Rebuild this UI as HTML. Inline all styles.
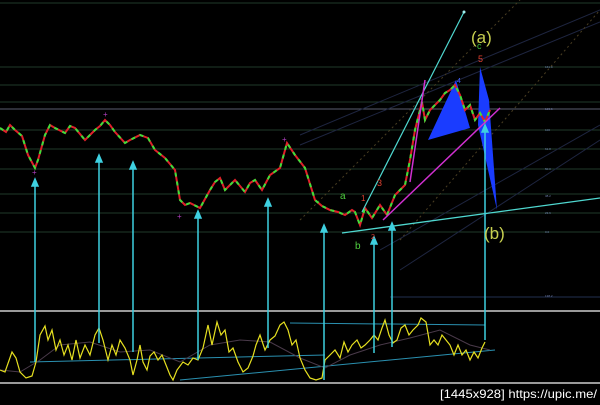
<!DOCTYPE html>
<html><head><style>
html,body{margin:0;padding:0;background:#000;}
svg{display:block;}
</style></head><body>
<svg width="600" height="405" viewBox="0 0 600 405" xmlns="http://www.w3.org/2000/svg" font-family="Liberation Sans, sans-serif">
<rect width="600" height="405" fill="#000"/>
<g stroke="#1f3a2a" stroke-width="1">
<line x1="0" y1="3" x2="600" y2="3"/>
<line x1="0" y1="67" x2="600" y2="67"/>
<line x1="0" y1="85" x2="600" y2="85"/>
<line x1="0" y1="102" x2="600" y2="102"/>
<line x1="0" y1="130" x2="600" y2="130"/>
<line x1="0" y1="149" x2="600" y2="149"/>
<line x1="0" y1="169" x2="600" y2="169"/>
<line x1="0" y1="194" x2="600" y2="194"/>
<line x1="0" y1="213" x2="600" y2="213"/>
<line x1="0" y1="232" x2="600" y2="232"/>
</g>
<line x1="0" y1="109" x2="600" y2="109" stroke="#5a5e70" stroke-width="1"/>
<line x1="390" y1="297" x2="600" y2="297" stroke="#223050"/>
<g font-size="3" fill="#7080b0">
<text x="545" y="68">161.8</text><text x="545" y="110">123.6</text><text x="545" y="131">100</text>
<text x="545" y="150">61.8</text><text x="545" y="170">50.0</text><text x="545" y="197">38.2</text>
<text x="545" y="214">23.6</text><text x="545" y="233">0.0</text><text x="545" y="297">138.2</text>
</g>
<g stroke="#1e2540" stroke-width="1" fill="none">
<line x1="300" y1="135" x2="600" y2="10"/>
<line x1="300" y1="145" x2="600" y2="22"/>
<line x1="380" y1="250" x2="600" y2="125"/>
<line x1="400" y1="270" x2="600" y2="140"/>
</g>
<g stroke="#4a3e22" stroke-width="1" stroke-dasharray="2 3" fill="none">
<line x1="300" y1="220" x2="520" y2="0"/>
<line x1="400" y1="240" x2="600" y2="10"/>
</g>
<polygon points="428,140 456,80 470,128" fill="#1a3cff"/>
<polygon points="480,67 489,100 497,210 478,125" fill="#1a3cff"/>
<polyline fill="none" stroke="#e0202a" stroke-width="2" points="0,128 6,132 10,125 15,130 22,136 28,155 35,168 38,160 45,135 50,125 55,128 65,133 70,126 75,128 85,140 95,130 100,126 105,120 110,125 115,132 125,143 130,140 140,135 148,138 155,150 165,158 175,170 180,200 185,205 190,203 200,208 210,190 215,182 220,178 225,190 235,180 245,192 250,183 255,180 262,190 270,175 280,168 287,143 295,155 305,168 315,200 322,206 330,210 338,212 345,215 352,210 355,212 360,225 365,208 372,218 380,205 387,215 395,195 405,185 410,160 415,130 420,110 422,102 425,120 430,110 440,100 445,93 450,90 455,85 460,95 465,110 470,105 475,120 480,113 485,122 490,110"/>
<polyline fill="none" stroke="#3ce03a" stroke-width="2" stroke-dasharray="4 5" points="0,128 6,132 10,125 15,130 22,136 28,155 35,168 38,160 45,135 50,125 55,128 65,133 70,126 75,128 85,140 95,130 100,126 105,120 110,125 115,132 125,143 130,140 140,135 148,138 155,150 165,158 175,170 180,200 185,205 190,203 200,208 210,190 215,182 220,178 225,190 235,180 245,192 250,183 255,180 262,190 270,175 280,168 287,143 295,155 305,168 315,200 322,206 330,210 338,212 345,215 352,210 355,212 360,225 365,208 372,218 380,205 387,215 395,195 405,185 410,160 415,130 420,110 422,102 425,120 430,110 440,100 445,93 450,90 455,85 460,95 465,110 470,105 475,120 480,113 485,122 490,110"/>
<g fill="#b040c0" font-size="8"><text x="32" y="175">+</text><text x="103" y="117">+</text><text x="177" y="219">+</text><text x="282" y="142">+</text></g>
<line x1="342" y1="233" x2="600" y2="198" stroke="#4fd8d0" stroke-width="1.3"/>
<line x1="362" y1="212" x2="464" y2="12" stroke="#4fd8d0" stroke-width="1.2"/>
<circle cx="464" cy="12" r="1.5" fill="#a0f0f0"/>
<line x1="383" y1="220" x2="500" y2="108" stroke="#d030d0" stroke-width="1.5"/>
<line x1="410" y1="182" x2="425" y2="80" stroke="#d030d0" stroke-width="1.5"/>
<line x1="0" y1="311" x2="600" y2="311" stroke="#9a9a9a" stroke-width="2"/>
<line x1="0" y1="383" x2="600" y2="383" stroke="#9a9a9a" stroke-width="2"/>
<line x1="30" y1="362" x2="325" y2="355" stroke="#2a90b0" stroke-width="1"/>
<line x1="180" y1="380" x2="495" y2="350" stroke="#2a90b0" stroke-width="1"/>
<line x1="290" y1="323" x2="485" y2="325" stroke="#2a90b0" stroke-width="1"/>
<polyline fill="none" stroke="#4a3a4a" stroke-width="1" points="0,370 20,372 40,360 60,345 90,342 120,352 150,350 180,362 210,345 240,340 270,342 300,358 325,368 350,355 380,345 410,338 440,330 470,345 490,350"/>
<polyline fill="none" stroke="#e6e020" stroke-width="1.2" points="0,370 5,372 12,352 16,358 20,372 26,378 32,376 36,362 40,335 45,326 48,340 52,330 56,350 60,340 64,355 68,345 72,360 76,340 80,358 85,345 90,355 95,335 99,328 103,340 108,360 112,345 116,355 120,340 125,348 130,360 133,375 137,360 140,345 143,362 147,370 150,356 154,352 158,360 162,355 166,365 170,375 173,380 177,370 183,362 188,365 193,358 198,360 203,348 208,325 212,345 217,322 221,335 225,330 229,352 233,348 238,362 243,372 248,368 253,356 256,345 260,335 265,350 270,340 275,336 280,325 284,322 288,330 292,345 296,340 300,358 305,370 310,378 316,380 322,378 325,360 330,355 335,350 340,358 344,342 348,352 352,345 357,340 361,348 365,345 370,340 374,335 378,340 382,328 385,320 389,335 393,343 397,340 401,328 405,325 409,335 413,330 418,325 421,318 426,322 430,345 434,340 438,345 442,335 446,340 450,345 454,355 458,345 462,355 466,350 470,360 474,352 478,358 482,348 485,342"/>
<g stroke="#3ed0e0" stroke-width="1.5" fill="#3ed0e0">
<line x1="35" y1="182" x2="35" y2="362"/><polygon points="32,186 38,186 35,179"/>
<line x1="99" y1="158" x2="99" y2="343"/><polygon points="96,162 102,162 99,155"/>
<line x1="133" y1="165" x2="133" y2="352"/><polygon points="130,169 136,169 133,162"/>
<line x1="198" y1="214" x2="198" y2="360"/><polygon points="195,218 201,218 198,211"/>
<line x1="268" y1="202" x2="268" y2="348"/><polygon points="265,206 271,206 268,199"/>
<line x1="324" y1="228" x2="324" y2="380"/><polygon points="321,232 327,232 324,225"/>
<line x1="374" y1="240" x2="374" y2="353"/><polygon points="371,244 377,244 374,237"/>
<line x1="392" y1="226" x2="392" y2="347"/><polygon points="389,230 395,230 392,223"/>
<line x1="485" y1="128" x2="485" y2="340"/><polygon points="482,132 488,132 485,125"/>
</g>
<text x="471" y="43" font-size="17" fill="#c8d050">(a)</text>
<text x="477" y="49" font-size="9" fill="#40c040">c</text>
<text x="478" y="62" font-size="9" fill="#e04030">5</text>
<text x="484" y="239" font-size="17" fill="#c8d050">(b)</text>
<text x="340" y="199" font-size="10" fill="#50d040">a</text>
<text x="361" y="201" font-size="8" fill="#e04030">1</text>
<text x="377" y="186" font-size="9" fill="#e04030">3</text>
<text x="355" y="249" font-size="10" fill="#50d040">b</text>
<text x="457" y="83" font-size="7" fill="#4060ff">4</text>
<text x="371" y="239" font-size="7" fill="#e04030">2</text>
<text x="440" y="398" font-size="12" fill="#ffffff" textLength="157" lengthAdjust="spacingAndGlyphs">[1445x928] https://upic.me/</text>
</svg>
</body></html>
